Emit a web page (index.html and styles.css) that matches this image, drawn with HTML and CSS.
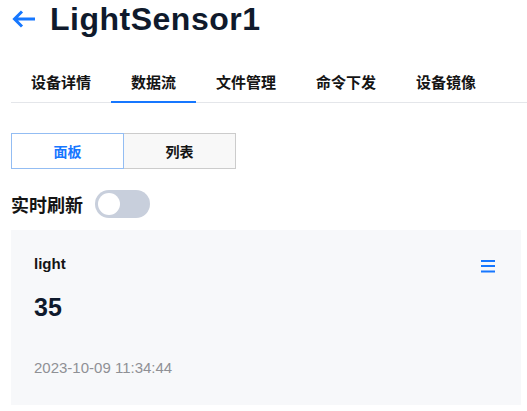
FILE: index.html
```html
<!DOCTYPE html>
<html lang="zh-CN">
<head>
<meta charset="utf-8">
<title>LightSensor1</title>
<link rel="stylesheet" href="styles.css">
</head>
<body>
<div class="page">
  <header class="header">
    <svg class="back" width="24" height="18" viewBox="0 0 24 18" aria-hidden="true">
      <path d="M23 9H2.5M10 1.5L2.5 9L10 16.5" fill="none" stroke="#1677ff" stroke-width="3" stroke-linecap="butt" stroke-linejoin="miter"/>
    </svg>
    <h1 class="title">LightSensor1</h1>
  </header>

  <nav class="tabs">
    <div class="tab">设备详情</div>
    <div class="tab active">数据流</div>
    <div class="tab">文件管理</div>
    <div class="tab">命令下发</div>
    <div class="tab">设备镜像</div>
  </nav>

  <div class="segment">
    <div class="seg seg-active">面板</div>
    <div class="seg seg-off">列表</div>
  </div>

  <div class="refresh">
    <span class="refresh-label">实时刷新</span>
    <span class="switch"><span class="knob"></span></span>
  </div>

  <section class="card">
    <div class="card-head">
      <span class="card-name">light</span>
      <svg class="menu" width="14" height="13" viewBox="0 0 14 13" aria-hidden="true">
        <rect x="0" y="0" width="14" height="2" fill="#1677ff"/>
        <rect x="0" y="5" width="14" height="2" fill="#1677ff"/>
        <rect x="0" y="10.5" width="14" height="2" fill="#1677ff"/>
      </svg>
    </div>
    <div class="card-value">35</div>
    <div class="card-time">2023-10-09 11:34:44</div>
  </section>
</div>
</body>
</html>
```

FILE: styles.css
```css
* { box-sizing: border-box; }

html, body {
  margin: 0;
  padding: 0;
  background: #ffffff;
}

body {
  font-family: "Liberation Sans", Arial, "Noto Sans CJK SC", sans-serif;
  color: #1a1a1a;
}

.page {
  padding: 0 6px 0 11px;
}

.header {
  display: flex;
  align-items: center;
  height: 38px;
}

.back {
  display: block;
  margin-left: 1px;
  margin-right: 14px;
}

.title {
  margin: 0;
  font-size: 32px;
  line-height: 38px;
  font-weight: 700;
  letter-spacing: 0.5px;
  color: #0f1a2c;
}

.tabs {
  display: flex;
  margin-top: 25px;
  margin-right: -6px;
  border-bottom: 1px solid #e4e6ea;
}

.tab {
  padding: 0 20px;
  height: 40px;
  line-height: 38px;
  font-family: "Noto Sans CJK SC", sans-serif;
  font-size: 15px;
  font-weight: 700;
  color: #141414;
  border-bottom: 2px solid transparent;
  margin-bottom: -1px;
}

.tab.active {
  border-bottom-color: #1677ff;
}

.segment {
  display: flex;
  margin-top: 30px;
  width: 225px;
  height: 36px;
}

.seg {
  flex: 1;
  display: flex;
  align-items: center;
  justify-content: center;
  font-family: "Noto Sans CJK SC", sans-serif;
  font-size: 14px;
  font-weight: 700;
}

.seg-active {
  border: 1px solid #93bdf3;
  color: #1677ff;
  background: #ffffff;
}

.seg-off {
  border: 1px solid #cccccc;
  border-left: none;
  background: #f8f8f8;
  color: #141414;
}

.refresh {
  display: flex;
  align-items: center;
  margin-top: 21px;
  height: 28px;
  gap: 12px;
}

.refresh-label {
  font-family: "Noto Sans CJK SC", sans-serif;
  font-size: 18px;
  font-weight: 700;
  color: #141414;
}

.switch {
  position: relative;
  display: block;
  width: 55px;
  height: 28px;
  border-radius: 14px;
  background: #c8cfdc;
}

.knob {
  position: absolute;
  left: 3px;
  top: 3px;
  width: 22px;
  height: 22px;
  border-radius: 50%;
  background: #ffffff;
}

.card {
  margin-top: 12px;
  height: 175px;
  background: #f7f8fa;
  padding: 24px 26px 0 23px;
}

.card-head {
  display: flex;
  align-items: center;
  justify-content: space-between;
  height: 20px;
}

.card-name {
  font-size: 15px;
  font-weight: 700;
  line-height: 20px;
  color: #141414;
}

.menu {
  display: block;
  margin-top: 4px;
}

.card-value {
  margin-top: 18px;
  font-size: 25px;
  font-weight: 700;
  line-height: 30px;
  color: #0f1a2c;
}

.card-time {
  margin-top: 36px;
  font-size: 15px;
  line-height: 20px;
  color: #8f9095;
}
```
